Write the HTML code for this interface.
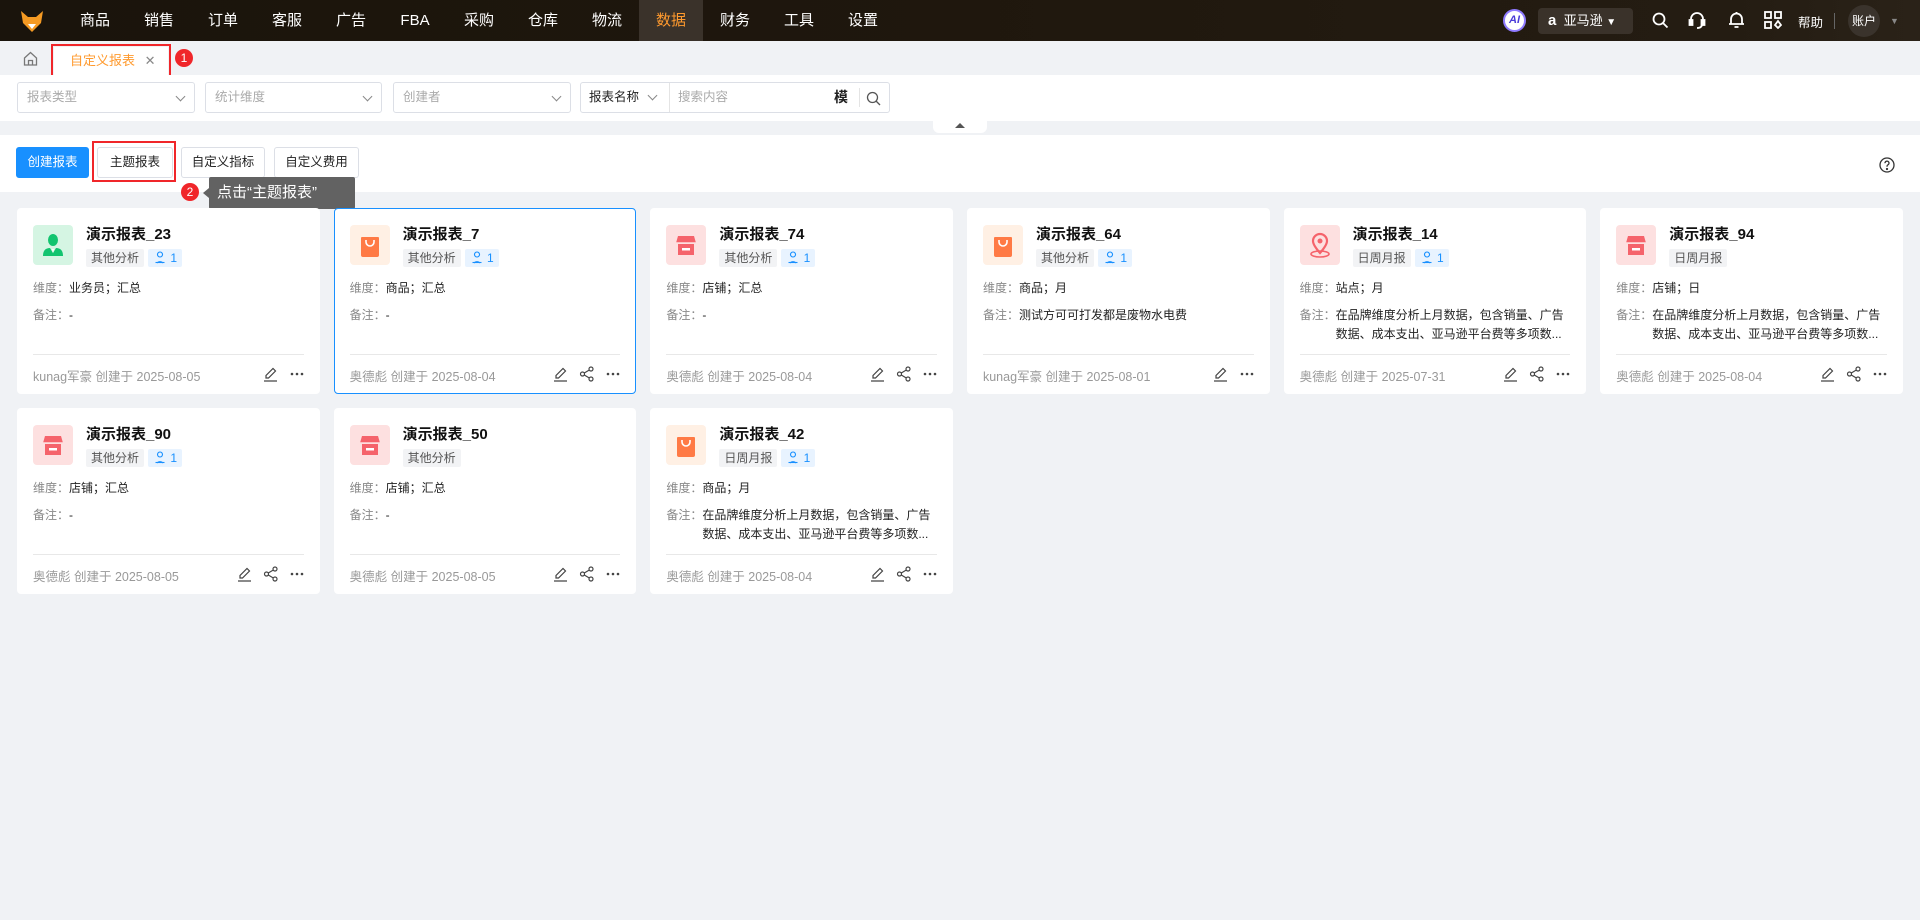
<!DOCTYPE html>
<html><head><meta charset="utf-8"><style>
*{box-sizing:border-box;margin:0;padding:0}
body{width:1920px;height:920px;background:#f0f2f5;font-family:"Liberation Sans","Noto Sans CJK SC",sans-serif;position:relative;overflow:hidden;color:#222}
.nav{position:absolute;left:0;top:0;width:1920px;height:41px;background:linear-gradient(90deg,#1a140c,#1f170d 50%,#241c12 90%,#2a2218);}
.nav .it{position:absolute;top:0;height:41px;line-height:41px;color:#fff;font-size:15px;width:64px;text-align:center;transform:translateX(-32px)}
.nav .act{background:#3a322a;color:#ff9a2e}
.abs{position:absolute}
.tabrow{position:absolute;top:41px;left:0;width:1920px;height:34px;background:#f0f2f5}
.filter{position:absolute;top:75px;left:0;width:1920px;height:46px;background:#fff}
.sel{position:absolute;top:82px;height:31px;border:1px solid #dcdfe6;border-radius:3px;font-size:12.5px;color:#aaa;line-height:29px;padding-left:9px;background:#fff}
.sel .ch{position:absolute;right:10px;top:10px;width:7px;height:7px;border-right:1.2px solid #888;border-bottom:1.2px solid #888;transform:rotate(45deg)}
.tool{position:absolute;top:135px;left:0;width:1920px;height:57px;background:#fff}
.btn{position:absolute;top:147px;height:31px;border:1px solid #dcdfe6;border-radius:3px;font-size:12.5px;line-height:29px;text-align:center;background:#fff;color:#222}
.redbox{position:absolute;border:2px solid #f0262a}
.badge{position:absolute;width:18px;height:18px;border-radius:50%;background:#f0262a;color:#fff;font-size:12px;line-height:18px;text-align:center}
.grid{position:absolute;left:17px;top:208px;display:grid;grid-template-columns:repeat(6,302.67px);column-gap:14px;row-gap:14px}
.card{height:186px;background:#fff;border-radius:4px;position:relative;border:1px solid #fff}
.card.sel2{border:1px solid #1890ff}
.ic{position:absolute;left:15px;top:16px;width:40px;height:40px;border-radius:4px}
.tt{position:absolute;left:68px;top:14px;font-size:15px;font-weight:bold;color:#111}
.tags{position:absolute;left:68px;top:40px;display:flex;gap:4px}
.tag{height:18px;line-height:18px;font-size:12px;padding:0 5px;background:#f2f3f5;color:#555;border-radius:2px}
.tag.b{background:#e8f3ff;color:#1890ff}
.ln{position:absolute;left:15px;font-size:12px;color:#222;line-height:19px;width:272px;display:flex}
.ln .k{color:#888;flex:none}
.dv{position:absolute;left:15px;right:15px;top:145px;border-top:1px solid #e8e8e8}
.ft{position:absolute;left:15px;top:157px;font-size:12.5px;color:#999}
.acts{position:absolute;right:14px;top:157px;display:flex;gap:10px;align-items:center}
</style></head><body>
<div class="nav">
<svg class="abs" style="left:20px;top:9px" width="24" height="24" viewBox="0 0 24 24"><path d="M1 2 L8 8 L16 8 L23 2 L21 14 L12 23 L3 14Z" fill="#f59a23"/><path d="M8 15 L12 20 L16 15Z" fill="#fff"/></svg>
<div class="it" style="left:95px">商品</div><div class="it" style="left:159px">销售</div><div class="it" style="left:223px">订单</div><div class="it" style="left:287px">客服</div><div class="it" style="left:351px">广告</div><div class="it" style="left:415px">FBA</div><div class="it" style="left:479px">采购</div><div class="it" style="left:543px">仓库</div><div class="it" style="left:607px">物流</div><div class="it act" style="left:671px">数据</div><div class="it" style="left:735px">财务</div><div class="it" style="left:799px">工具</div><div class="it" style="left:863px">设置</div>
<div class="abs" style="left:1503px;top:9px;width:23px;height:23px;border-radius:50%;background:#fff;border:2px solid #8f7bff;color:#4a3bd8;font-size:11px;font-weight:bold;font-style:italic;text-align:center;line-height:19px">AI</div>
<div class="abs" style="left:1538px;top:8px;width:95px;height:26px;border-radius:4px;background:#3a322a;color:#fff;font-size:13px;line-height:26px;padding-left:10px"><b style="font-size:15px">a</b>&nbsp; 亚马逊 <span style="font-size:10px">▼</span></div>
<svg class="abs" style="left:1652px;top:12px" width="17" height="17" viewBox="0 0 17 17" fill="none" stroke="#fff" stroke-width="1.8"><circle cx="7" cy="7" r="5.5"/><path d="M11 11 L15.5 15.5"/></svg>
<svg class="abs" style="left:1688px;top:11px" width="18" height="19" viewBox="0 0 18 19" fill="none" stroke="#fff" stroke-width="1.8"><path d="M3 11 V8 A6 6 0 0 1 15 8 V11"/><rect x="1.5" y="9" width="3" height="5" fill="#fff"/><rect x="13.5" y="9" width="3" height="5" fill="#fff"/><path d="M9 17 Q14 17 14 13"/></svg>
<svg class="abs" style="left:1728px;top:11px" width="17" height="18" viewBox="0 0 17 18" fill="none" stroke="#fff" stroke-width="1.8"><path d="M3 13 V8 A5.5 5.5 0 0 1 14 8 V13 Z M1 13 H16 M8.5 1 V2.5 M6.5 16 H10.5"/></svg>
<svg class="abs" style="left:1764px;top:11px" width="18" height="18" viewBox="0 0 18 18" fill="none" stroke="#fff" stroke-width="1.8"><rect x="1" y="1" width="6" height="6"/><rect x="11" y="1" width="6" height="6"/><rect x="1" y="11" width="6" height="6"/><path d="M14 10 L17 14 L14 17 L11 14Z"/></svg>
<div class="abs" style="left:1798px;top:12px;color:#fff;font-size:12.5px">帮助</div>
<div class="abs" style="left:1834px;top:13px;width:1px;height:16px;background:#666"></div>
<div class="abs" style="left:1848px;top:5px;width:32px;height:32px;border-radius:50%;background:#3a332c;color:#fff;font-size:12px;line-height:32px;text-align:center">账户</div>
<div class="abs" style="left:1890px;top:16px;color:#888;font-size:9px">▼</div>
</div>
<div class="tabrow">
<svg class="abs" style="left:23px;top:10px" width="15" height="15" viewBox="0 0 15 15" fill="none" stroke="#777" stroke-width="1.3"><path d="M1.5 7 L7.5 1.5 L13.5 7 V14 H1.5Z M5.5 14 V9.5 H9.5 V14"/></svg>
<div class="abs" style="left:54px;top:6px;width:114px;height:28px;background:#fff;color:#ff9a2e;font-size:13px;line-height:28px;padding-left:16px">自定义报表 <span style="color:#888;margin-left:6px">✕</span></div>
<div class="redbox" style="left:51px;top:3px;width:120px;height:33px"></div>
<div class="badge" style="left:175px;top:8px">1</div>
</div>
<div class="filter"></div>
<div class="sel" style="left:17px;width:178px">报表类型<span class="ch"></span></div>
<div class="sel" style="left:205px;width:177px">统计维度<span class="ch"></span></div>
<div class="sel" style="left:393px;width:178px">创建者<span class="ch"></span></div>
<div class="sel" style="left:580px;width:310px;color:#222;padding-left:8px">报表名称<span class="abs" style="left:68px;top:9px;width:7px;height:7px;border-right:1.2px solid #888;border-bottom:1.2px solid #888;transform:rotate(45deg)"></span><span class="abs" style="left:88px;top:0;height:29px;border-left:1px solid #e4e4e4;padding-left:8px;color:#aaa">搜索内容</span><b class="abs" style="left:253px;top:0;font-size:14px">模</b><span class="abs" style="left:278px;top:5px;height:19px;border-left:1px solid #e4e4e4"></span><svg class="abs" style="left:285px;top:8px" width="15" height="15" viewBox="0 0 15 15" fill="none" stroke="#555" stroke-width="1.3"><circle cx="6.5" cy="6.5" r="5"/><path d="M10 10 L14 14"/></svg></div>
<div class="abs" style="left:933px;top:121px;width:54px;height:12px;background:#fff;border-radius:0 0 6px 6px"><div style="margin:2px auto 0;width:0;height:0;border-left:5px solid transparent;border-right:5px solid transparent;border-bottom:5px solid #555"></div></div>
<div class="tool"></div>
<div class="btn" style="left:16px;width:73px;background:#1890ff;border-color:#1890ff;color:#fff">创建报表</div>
<div class="btn" style="left:97px;width:76px">主题报表</div>
<div class="redbox" style="left:92px;top:141px;width:84px;height:41px"></div>
<div class="btn" style="left:181px;width:84px">自定义指标</div>
<div class="btn" style="left:274px;width:85px">自定义费用</div>
<svg class="abs" style="left:1879px;top:157px" width="16" height="16" viewBox="0 0 16 16" fill="none" stroke="#333" stroke-width="1.3"><circle cx="8" cy="8" r="7"/><path d="M6 6.2 A2 2 0 1 1 8.6 8 Q8 8.4 8 9.8"/><circle cx="8" cy="12" r=".5" fill="#333"/></svg>
<div class="badge" style="left:181px;top:183px">2</div>
<div class="abs" style="left:209px;top:177px;width:146px;height:32px;background:#626262;color:#fff;font-size:15px;line-height:32px;padding-left:8px;border-radius:2px">点击“主题报表”</div>
<div class="abs" style="left:203px;top:188px;width:0;height:0;border-top:5px solid transparent;border-bottom:5px solid transparent;border-right:6px solid #626262"></div>

<svg width="0" height="0" style="position:absolute"><defs>
<g id="pen"><path d="M3 12 L3 9.5 L10 2.5 L12.5 5 L5.5 12Z M1 15 H14" fill="none" stroke="#444" stroke-width="1.2"/></g>
<g id="share"><circle cx="12" cy="3" r="2" fill="none" stroke="#444" stroke-width="1.2"/><circle cx="3.5" cy="8" r="2" fill="none" stroke="#444" stroke-width="1.2"/><circle cx="12" cy="13" r="2" fill="none" stroke="#444" stroke-width="1.2"/><path d="M5.3 7 L10.3 4 M5.3 9 L10.3 12" stroke="#444" stroke-width="1.2"/></g>
<g id="more"><circle cx="3" cy="8" r="1.3" fill="#444"/><circle cx="8" cy="8" r="1.3" fill="#444"/><circle cx="13" cy="8" r="1.3" fill="#444"/></g>
<g id="user"><path d="M4 13 A4 4 0 0 1 10 13 M7 2 a2.5 2.5 0 1 0 .01 0" fill="none" stroke="#1890ff" stroke-width="1.1"/><path d="M2.5 12.5 H11.5" stroke="#1890ff" stroke-width="1.1"/></g>
<g id="bag"><path d="M12 12 H28 Q29 12 29 13 L29 30 Q29 32 27 32 H13 Q11 32 11 30 L11 13 Q11 12 12 12Z" fill="#ff7a45"/><path d="M16 15 V17 A4 4 0 0 0 24 17 V15" fill="none" stroke="#fff" stroke-width="1.6"/></g>
</defs></svg>

<div class="grid">
<div class="card"><div class="ic" style="background:#d5f5e3"><svg width="40" height="40" viewBox="0 0 40 40"><ellipse cx="20" cy="15" rx="5" ry="6" fill="#12c46f"/><path d="M10 31 Q10 23 17 23 L20 28 L23 23 Q30 23 30 31Z" fill="#12c46f"/><path d="M19 24 h2 l-1 4z" fill="#fff"/></svg></div>
<div class="tt">演示报表_23</div><div class="tags"><span class="tag">其他分析</span><span class="tag b"><svg width="14" height="14" viewBox="0 0 14 14" style="vertical-align:-2px"><use href="#user"/></svg> 1</span></div>
<div class="ln" style="top:70px"><span class="k">维度：</span>业务员；汇总</div><div class="ln" style="top:97px"><span class="k">备注：</span>-</div>
<div class="dv"></div><div class="ft">kunag军豪 创建于 2025-08-05</div>
<div class="acts"><svg width="16" height="16"><use href="#pen"/></svg><svg width="16" height="16"><use href="#more"/></svg></div></div>
<div class="card sel2"><div class="ic" style="background:#fff0e4"><svg width="40" height="40" viewBox="0 0 40 40"><use href="#bag"/></svg></div>
<div class="tt">演示报表_7</div><div class="tags"><span class="tag">其他分析</span><span class="tag b"><svg width="14" height="14" viewBox="0 0 14 14" style="vertical-align:-2px"><use href="#user"/></svg> 1</span></div>
<div class="ln" style="top:70px"><span class="k">维度：</span>商品；汇总</div><div class="ln" style="top:97px"><span class="k">备注：</span>-</div>
<div class="dv"></div><div class="ft">奥德彪 创建于 2025-08-04</div>
<div class="acts"><svg width="16" height="16"><use href="#pen"/></svg><svg width="16" height="16"><use href="#share"/></svg><svg width="16" height="16"><use href="#more"/></svg></div></div>
<div class="card"><div class="ic" style="background:#fde0e0"><svg width="40" height="40" viewBox="0 0 40 40"><path d="M12 11 H28 L30 18 H10Z" fill="#f5636b"/><path d="M12 19 H28 V30 H12Z" fill="#f5636b"/><rect x="16" y="23" width="8" height="2.5" fill="#fff"/><path d="M10 18 H30" stroke="#fde0e0" stroke-width="1.5"/></svg></div>
<div class="tt">演示报表_74</div><div class="tags"><span class="tag">其他分析</span><span class="tag b"><svg width="14" height="14" viewBox="0 0 14 14" style="vertical-align:-2px"><use href="#user"/></svg> 1</span></div>
<div class="ln" style="top:70px"><span class="k">维度：</span>店铺；汇总</div><div class="ln" style="top:97px"><span class="k">备注：</span>-</div>
<div class="dv"></div><div class="ft">奥德彪 创建于 2025-08-04</div>
<div class="acts"><svg width="16" height="16"><use href="#pen"/></svg><svg width="16" height="16"><use href="#share"/></svg><svg width="16" height="16"><use href="#more"/></svg></div></div>
<div class="card"><div class="ic" style="background:#fff0e4"><svg width="40" height="40" viewBox="0 0 40 40"><use href="#bag"/></svg></div>
<div class="tt">演示报表_64</div><div class="tags"><span class="tag">其他分析</span><span class="tag b"><svg width="14" height="14" viewBox="0 0 14 14" style="vertical-align:-2px"><use href="#user"/></svg> 1</span></div>
<div class="ln" style="top:70px"><span class="k">维度：</span>商品；月</div><div class="ln" style="top:97px"><span class="k">备注：</span>测试方可可打发都是废物水电费</div>
<div class="dv"></div><div class="ft">kunag军豪 创建于 2025-08-01</div>
<div class="acts"><svg width="16" height="16"><use href="#pen"/></svg><svg width="16" height="16"><use href="#more"/></svg></div></div>
<div class="card"><div class="ic" style="background:#fde0e0"><svg width="40" height="40" viewBox="0 0 40 40"><path d="M20 28 Q13 20 13 16 A7 7 0 0 1 27 16 Q27 20 20 28Z" fill="none" stroke="#f5636b" stroke-width="2.2"/><circle cx="20" cy="16" r="2.5" fill="#f5636b"/><ellipse cx="20" cy="29" rx="9" ry="3" fill="none" stroke="#f5636b" stroke-width="1.6"/></svg></div>
<div class="tt">演示报表_14</div><div class="tags"><span class="tag">日周月报</span><span class="tag b"><svg width="14" height="14" viewBox="0 0 14 14" style="vertical-align:-2px"><use href="#user"/></svg> 1</span></div>
<div class="ln" style="top:70px"><span class="k">维度：</span>站点；月</div><div class="ln" style="top:97px"><span class="k">备注：</span><span>在品牌维度分析上月数据，包含销量、广告数据、成本支出、亚马逊平台费等多项数...</span></div>
<div class="dv"></div><div class="ft">奥德彪 创建于 2025-07-31</div>
<div class="acts"><svg width="16" height="16"><use href="#pen"/></svg><svg width="16" height="16"><use href="#share"/></svg><svg width="16" height="16"><use href="#more"/></svg></div></div>
<div class="card"><div class="ic" style="background:#fde0e0"><svg width="40" height="40" viewBox="0 0 40 40"><path d="M12 11 H28 L30 18 H10Z" fill="#f5636b"/><path d="M12 19 H28 V30 H12Z" fill="#f5636b"/><rect x="16" y="23" width="8" height="2.5" fill="#fff"/><path d="M10 18 H30" stroke="#fde0e0" stroke-width="1.5"/></svg></div>
<div class="tt">演示报表_94</div><div class="tags"><span class="tag">日周月报</span></div>
<div class="ln" style="top:70px"><span class="k">维度：</span>店铺；日</div><div class="ln" style="top:97px"><span class="k">备注：</span><span>在品牌维度分析上月数据，包含销量、广告数据、成本支出、亚马逊平台费等多项数...</span></div>
<div class="dv"></div><div class="ft">奥德彪 创建于 2025-08-04</div>
<div class="acts"><svg width="16" height="16"><use href="#pen"/></svg><svg width="16" height="16"><use href="#share"/></svg><svg width="16" height="16"><use href="#more"/></svg></div></div>
<div class="card"><div class="ic" style="background:#fde0e0"><svg width="40" height="40" viewBox="0 0 40 40"><path d="M12 11 H28 L30 18 H10Z" fill="#f5636b"/><path d="M12 19 H28 V30 H12Z" fill="#f5636b"/><rect x="16" y="23" width="8" height="2.5" fill="#fff"/><path d="M10 18 H30" stroke="#fde0e0" stroke-width="1.5"/></svg></div>
<div class="tt">演示报表_90</div><div class="tags"><span class="tag">其他分析</span><span class="tag b"><svg width="14" height="14" viewBox="0 0 14 14" style="vertical-align:-2px"><use href="#user"/></svg> 1</span></div>
<div class="ln" style="top:70px"><span class="k">维度：</span>店铺；汇总</div><div class="ln" style="top:97px"><span class="k">备注：</span>-</div>
<div class="dv"></div><div class="ft">奥德彪 创建于 2025-08-05</div>
<div class="acts"><svg width="16" height="16"><use href="#pen"/></svg><svg width="16" height="16"><use href="#share"/></svg><svg width="16" height="16"><use href="#more"/></svg></div></div>
<div class="card"><div class="ic" style="background:#fde0e0"><svg width="40" height="40" viewBox="0 0 40 40"><path d="M12 11 H28 L30 18 H10Z" fill="#f5636b"/><path d="M12 19 H28 V30 H12Z" fill="#f5636b"/><rect x="16" y="23" width="8" height="2.5" fill="#fff"/><path d="M10 18 H30" stroke="#fde0e0" stroke-width="1.5"/></svg></div>
<div class="tt">演示报表_50</div><div class="tags"><span class="tag">其他分析</span></div>
<div class="ln" style="top:70px"><span class="k">维度：</span>店铺；汇总</div><div class="ln" style="top:97px"><span class="k">备注：</span>-</div>
<div class="dv"></div><div class="ft">奥德彪 创建于 2025-08-05</div>
<div class="acts"><svg width="16" height="16"><use href="#pen"/></svg><svg width="16" height="16"><use href="#share"/></svg><svg width="16" height="16"><use href="#more"/></svg></div></div>
<div class="card"><div class="ic" style="background:#fff0e4"><svg width="40" height="40" viewBox="0 0 40 40"><use href="#bag"/></svg></div>
<div class="tt">演示报表_42</div><div class="tags"><span class="tag">日周月报</span><span class="tag b"><svg width="14" height="14" viewBox="0 0 14 14" style="vertical-align:-2px"><use href="#user"/></svg> 1</span></div>
<div class="ln" style="top:70px"><span class="k">维度：</span>商品；月</div><div class="ln" style="top:97px"><span class="k">备注：</span><span>在品牌维度分析上月数据，包含销量、广告数据、成本支出、亚马逊平台费等多项数...</span></div>
<div class="dv"></div><div class="ft">奥德彪 创建于 2025-08-04</div>
<div class="acts"><svg width="16" height="16"><use href="#pen"/></svg><svg width="16" height="16"><use href="#share"/></svg><svg width="16" height="16"><use href="#more"/></svg></div></div>
</div>
</body></html>
